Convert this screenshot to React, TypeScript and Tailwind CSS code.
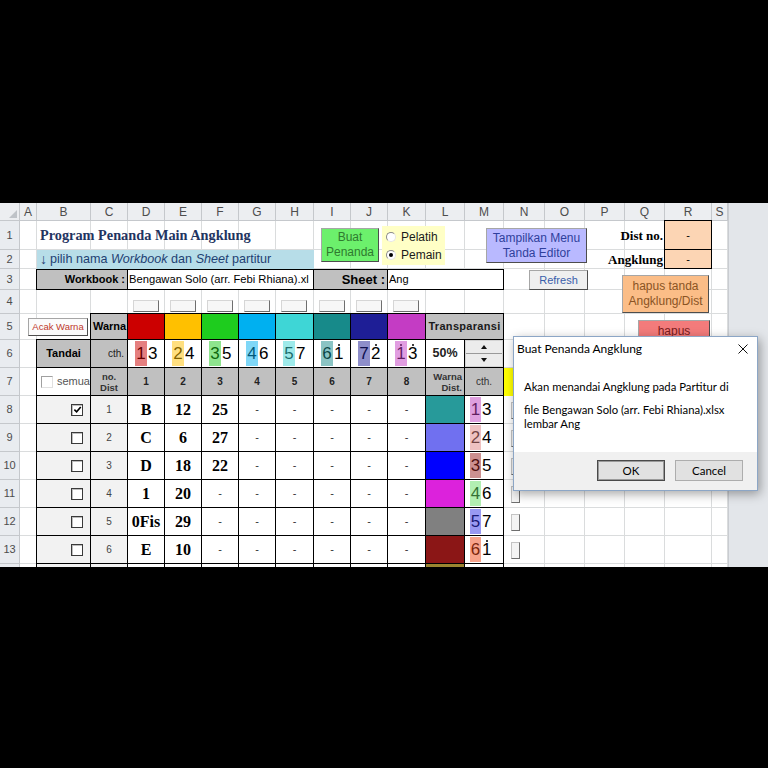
import React from 'react';

const SANS = "font-['Liberation_Sans',Arial,sans-serif]";
const SERIF = "font-['Liberation_Serif','Times_New_Roman',serif]";
const UI = "font-['Lato','Noto_Sans',sans-serif]";

const GRID =
  'grid grid-cols-[20px_17px_54px_37px_37px_37px_37px_37px_38px_37px_37px_38px_39px_39px_41px_40px_40px_40px_47px_16px] grid-rows-[18px_29px_19px_21px_24px_26px_28px_28px_28px_28px_28px_28px_28px_28px_28px]';

const COL = [
  'col-start-1', 'col-start-2', 'col-start-3', 'col-start-4', 'col-start-5',
  'col-start-6', 'col-start-7', 'col-start-8', 'col-start-9', 'col-start-10',
  'col-start-11', 'col-start-12', 'col-start-13', 'col-start-14', 'col-start-15',
  'col-start-16', 'col-start-17', 'col-start-18', 'col-start-19', 'col-start-20',
];
const ROW = [
  'row-start-1', 'row-start-2', 'row-start-3', 'row-start-4', 'row-start-5',
  'row-start-6', 'row-start-7', 'row-start-8', 'row-start-9', 'row-start-10',
  'row-start-11', 'row-start-12', 'row-start-13', 'row-start-14', 'row-start-15',
];
const at = (c: number, r: number) => `${COL[c - 1]} ${ROW[r - 1]}`;

const LETTERS = 'ABCDEFGHIJKLMNOPQRS'.split('');

// a trailing "*" marks a note with a dot above (high octave)
const SWATCH = [
  { fill: 'bg-[#cc0000]', a: '1', b: '3' },
  { fill: 'bg-[#ffc000]', a: '2', b: '4' },
  { fill: 'bg-[#1ecc1e]', a: '3', b: '5' },
  { fill: 'bg-[#00b0f0]', a: '4', b: '6' },
  { fill: 'bg-[#3ed6d6]', a: '5', b: '7' },
  { fill: 'bg-[#178a8a]', a: '6', b: '1*' },
  { fill: 'bg-[#1e1e96]', a: '7', b: '2*' },
  { fill: 'bg-[#c43cc4]', a: '1*', b: '3*' },
];

const DISTS = [
  { n: 1, on: true, vals: ['B', '12', '25'], color: 'bg-[#279a9a]', hl: 'bg-[#c040c0]', a: '1', b: '3' },
  { n: 2, on: false, vals: ['C', '6', '27'], color: 'bg-[#7070f0]', hl: 'bg-[#e08484]', a: '2', b: '4' },
  { n: 3, on: false, vals: ['D', '18', '22'], color: 'bg-[#0000ff]', hl: 'bg-[#9a2222]', a: '3', b: '5' },
  { n: 4, on: false, vals: ['1', '20', '-'], color: 'bg-[#dc22dc]', hl: 'bg-[#66e066]', a: '4', b: '6' },
  { n: 5, on: false, vals: ['0Fis', '29', '-'], color: 'bg-[#808080]', hl: 'bg-[#3434e6]', a: '5', b: '7' },
  { n: 6, on: false, vals: ['E', '10', '-'], color: 'bg-[#8b1616]', hl: 'bg-[#f04818]', a: '6', b: '1*' },
];

const EDGE = 'border-r border-b border-black';
const GRAY = 'bg-[#c0c0c0]';
const FORM_BTN = 'self-start justify-self-start flex flex-col items-center justify-center border border-[#a6a6a6] border-b-[#4d4d4d] border-r-[#4d4d4d]';

function Note({ t }: { t: string }) {
  if (!t.endsWith('*')) return <span>{t}</span>;
  return (
    <span className="relative">
      {t[0]}
      <span className="absolute left-[calc(50%-1px)] top-[-1px] h-[2px] w-[2px] rounded-full bg-black" />
    </span>
  );
}

function Pair({ hl, a, b, pad, w }: { hl: string; a: string; b: string; pad: string; w: string }) {
  return (
    <div className={`flex h-full items-center ${pad} ${SANS} text-[17px] leading-none text-black`}>
      <span className={`relative flex h-[25px] ${w} items-center justify-center`}>
        <Note t={a} />
        <span className={`absolute inset-0 opacity-50 ${hl}`} />
      </span>
      <span className="ml-px flex">
        <Note t={b} />
      </span>
    </div>
  );
}

function Check({ on, soft }: { on?: boolean; soft?: boolean }) {
  return (
    <span
      className={`flex h-[12px] w-[12px] items-center justify-center bg-white ${
        soft ? 'border border-[#a0a0a0] border-b-[#e0e0e0] border-r-[#e0e0e0]' : 'border border-[#3a3a3a] shadow-[inset_1px_1px_0_#bdbdbd]'
      }`}
    >
      {on && (
        <svg viewBox="0 0 10 10" className="h-[9px] w-[9px]">
          <path d="M1.5 5.2 L4 7.6 L8.6 2.2" fill="none" stroke="#000" strokeWidth="1.8" />
        </svg>
      )}
    </span>
  );
}

function Radio({ on }: { on?: boolean }) {
  return (
    <span className="flex h-[10px] w-[10px] items-center justify-center rounded-full border border-[#8a8a8a] border-b-[#e6e6e6] border-r-[#e6e6e6] bg-white">
      {on && <span className="h-[4px] w-[4px] rounded-full bg-black" />}
    </span>
  );
}

function Spin() {
  return (
    <div className="flex h-full flex-col bg-[#d4d4d4] px-px py-px">
      <div className="flex flex-1 items-center justify-center border-b border-[#9a9a9a] bg-[#ececec]">
        <svg viewBox="0 0 6 4" className="h-[4px] w-[6px]"><path d="M0 4 L3 0 L6 4 Z" fill="#111" /></svg>
      </div>
      <div className="flex flex-1 items-center justify-center bg-[#ececec]">
        <svg viewBox="0 0 6 4" className="h-[4px] w-[6px]"><path d="M0 0 L3 4 L6 0 Z" fill="#111" /></svg>
      </div>
    </div>
  );
}

function Dialog() {
  return (
    <div className={`absolute left-[513px] top-[336px] flex h-[155px] w-[245px] flex-col border border-[#8ca6c6] bg-white shadow-[2px_3px_10px_rgba(0,0,0,0.35)] ${UI}`}>
      <div className="flex h-[24px] shrink-0 items-center justify-between pl-[3px] pr-[9px] text-[12px] text-black">
        <span>Buat Penanda Angklung</span>
        <svg viewBox="0 0 10 10" className="h-[10px] w-[10px]">
          <path d="M0.5 0.5 L9.5 9.5 M9.5 0.5 L0.5 9.5" stroke="#111" strokeWidth="1" />
        </svg>
      </div>
      <div className="flex-1 pl-[10px] pt-[19px] text-[11.3px] leading-[14px] text-black">
        <p>Akan menandai Angklung pada Partitur di</p>
        <p className="mt-[9px]">file Bengawan Solo (arr. Febi Rhiana).xlsx</p>
        <p>lembar Ang</p>
      </div>
      <div className="flex h-[38px] shrink-0 items-start justify-end gap-[10px] bg-[#f0f0f0] pr-[14px] pt-[8px] text-[11.5px] text-black">
        <button className="flex h-[21px] w-[68px] items-center justify-center border border-[#4a4a4a] bg-[#e1e1e1] shadow-[inset_0_0_0_1px_#9a9a9a]">OK</button>
        <button className="flex h-[21px] w-[68px] items-center justify-center border border-[#adadad] bg-[#e1e1e1]">Cancel</button>
      </div>
    </div>
  );
}

export default function App() {
  const gridCells: React.ReactNode[] = [];
  for (let r = 2; r <= 15; r++) {
    for (let c = 2; c <= 20; c++) {
      gridCells.push(<div key={`g${r}-${c}`} className={`${at(c, r)} border-r border-b border-[#dadcdd] bg-white`} />);
    }
  }

  return (
    <div className="relative h-[768px] w-[768px] overflow-hidden bg-black">
      <div className="mt-[203px] flex h-[364px]">
        <div className="h-full w-[728px] overflow-hidden bg-white">
          <div className={`${GRID} ${SANS}`}>
            {/* headers */}
            <div className={`${at(1, 1)} flex items-end justify-end border-r border-b border-[#c5c8cc] bg-[#eceef1] p-[2px]`}>
              <svg viewBox="0 0 8 8" className="h-[8px] w-[8px]"><path d="M8 0 L8 8 L0 8 Z" fill="#bfc3c8" /></svg>
            </div>
            {LETTERS.map((l, i) => (
              <div key={l} className={`${at(i + 2, 1)} flex items-center justify-center border-r border-b border-[#c5c8cc] bg-[#eceef1] text-[12px] text-[#4d4d4d]`}>
                {l}
              </div>
            ))}
            {Array.from({ length: 14 }, (_, i) => (
              <div key={`rh${i}`} className={`${at(1, i + 2)} flex items-center justify-center border-r border-b border-[#c5c8cc] bg-[#e9ecf0] text-[11px] text-[#4d4d4d]`}>
                {i < 13 ? i + 1 : ''}
              </div>
            ))}

            {gridCells}

            {/* rows 1-3 */}
            <div className={`${at(3, 2)} col-span-8 flex items-center whitespace-nowrap pl-[3px] ${SERIF} text-[14.3px] font-bold text-[#1f3461]`}>
              Program Penanda Main Angklung
            </div>
            <div className={`${at(3, 3)} col-span-7 flex items-center whitespace-nowrap bg-[#b7dde8] pl-[3px] text-[12.6px] text-[#1f4173]`}>
              <span className="mr-[3px] text-[14px]">↓</span>pilih nama&nbsp;<i>Workbook</i>&nbsp;dan&nbsp;<i>Sheet</i>&nbsp;partitur
            </div>
            <div className={`${at(3, 4)} col-span-2 -ml-px flex items-center justify-end border border-black ${GRAY} pr-[2px] text-[11px] font-bold text-black`}>
              Workbook :
            </div>
            <div className={`${at(5, 4)} col-span-5 flex items-center overflow-hidden whitespace-nowrap border-y border-r border-black bg-white pl-[1px] text-[11.2px] text-black`}>
              Bengawan Solo (arr. Febi Rhiana).xl
            </div>
            <div className={`${at(10, 4)} col-span-2 flex items-center justify-end border-y border-r border-black ${GRAY} pr-[2px] text-[13px] font-bold text-black`}>
              Sheet :
            </div>
            <div className={`${at(12, 4)} col-span-3 flex items-center border-y border-r border-black bg-white pl-[1px] text-[11px] text-black`}>
              Ang
            </div>

            <div className={`${at(18, 2)} flex items-center justify-end pr-[2px] ${SERIF} whitespace-nowrap text-[13px] font-bold text-black`}>
              Dist no.
            </div>
            <div className={`${at(17, 3)} col-span-2 flex items-center justify-end pr-[2px] ${SERIF} whitespace-nowrap text-[13px] font-bold text-black`}>
              Angklung
            </div>
            <div className={`${at(19, 2)} -ml-px -mt-px flex items-center justify-center border border-black bg-[#fcd5b4] text-[11px] text-black`}>-</div>
            <div className={`${at(19, 3)} -ml-px flex items-center justify-center border-x border-b border-black bg-[#fcd5b4] text-[11px] text-black`}>-</div>

            {/* table: row 5 */}
            <div className={`${at(4, 6)} -ml-px -mt-px flex items-center border border-black ${GRAY} pl-[2px] text-[11px] font-bold text-black`}>
              Warna
            </div>
            {SWATCH.map((s, i) => (
              <div key={`sw${i}`} className={`${at(i + 5, 6)} -mt-px border-t ${EDGE} ${s.fill}`} />
            ))}
            <div className={`${at(13, 6)} col-span-2 -mt-px flex items-center justify-center border-t ${EDGE} ${GRAY} text-[11px] font-bold tracking-[0.3px] text-[#1a1a1a]`}>
              Transparansi
            </div>

            {/* row 6 */}
            <div className={`${at(3, 7)} -ml-px -mt-px flex items-center justify-center border border-black ${GRAY} text-[11px] font-bold text-black`}>
              Tandai
            </div>
            <div className={`${at(4, 7)} -ml-px flex items-center justify-end border-l ${EDGE} ${GRAY} pr-[3px] text-[10px] text-[#222]`}>
              cth.
            </div>
            {SWATCH.map((s, i) => (
              <div key={`p${i}`} className={`${at(i + 5, 7)} ${EDGE} bg-white`}>
                <Pair hl={s.fill} a={s.a} b={s.b} pad="pl-[7px]" w="w-[12px]" />
              </div>
            ))}
            <div className={`${at(13, 7)} flex items-center justify-center ${EDGE} bg-white text-[12.5px] font-semibold text-[#222]`}>
              50%
            </div>
            <div className={`${at(14, 7)} ${EDGE}`}>
              <Spin />
            </div>

            {/* row 7 */}
            <div className={`${at(3, 8)} -ml-px flex items-center gap-[4px] border-l ${EDGE} bg-white pl-[4px] text-[11px] text-[#555]`}>
              <Check soft />
              <span>semua</span>
            </div>
            <div className={`${at(4, 8)} flex flex-col items-center justify-center ${EDGE} ${GRAY} text-[9.5px] font-bold leading-[11px] text-[#333]`}>
              <span>no.</span>
              <span>Dist</span>
            </div>
            {SWATCH.map((_, i) => (
              <div key={`h${i}`} className={`${at(i + 5, 8)} flex items-center justify-center ${EDGE} ${GRAY} text-[10px] font-bold text-[#222]`}>
                {i + 1}
              </div>
            ))}
            <div className={`${at(13, 8)} flex flex-col items-end justify-center ${EDGE} ${GRAY} pr-[2px] text-[9.5px] font-bold leading-[11px] text-[#333]`}>
              <span>Warna</span>
              <span>Dist.</span>
            </div>
            <div className={`${at(14, 8)} flex items-center justify-center ${EDGE} ${GRAY} text-[10px] text-[#333]`}>
              cth.
            </div>
            <div className={`${at(15, 8)} bg-[#ffff00]`} />

            {/* rows 8-13 */}
            {DISTS.map((d, i) => {
              const r = i + 9;
              return (
                <React.Fragment key={`d${d.n}`}>
                  <div className={`${at(3, r)} -ml-px flex items-center justify-end border-l ${EDGE} bg-[#f2f2f2] pr-[7px]`}>
                    <Check on={d.on} />
                  </div>
                  <div className={`${at(4, r)} flex items-center justify-center ${EDGE} bg-[#f2f2f2] text-[10px] text-[#444]`}>
                    {d.n}
                  </div>
                  {d.vals.map((v, j) => (
                    <div
                      key={`v${j}`}
                      className={`${at(j + 5, r)} flex items-center justify-center ${EDGE} bg-white ${
                        v === '-' ? 'text-[11px] text-[#333]' : `${SERIF} text-[16px] font-bold text-black`
                      }`}
                    >
                      {v}
                    </div>
                  ))}
                  {[8, 9, 10, 11, 12].map((c) => (
                    <div key={`e${c}`} className={`${at(c, r)} flex items-center justify-center ${EDGE} bg-white text-[11px] text-[#333]`}>
                      -
                    </div>
                  ))}
                  <div className={`${at(13, r)} ${EDGE} ${d.color}`} />
                  <div className={`${at(14, r)} ${EDGE} bg-white`}>
                    <Pair hl={d.hl} a={d.a} b={d.b} pad="pl-[5px]" w="w-[11px]" />
                  </div>
                  <div className={`${at(15, r)} flex items-center`}>
                    <span className="ml-[7px] h-[17px] w-[9px] border border-[#c4c4c4] border-b-[#6e6e6e] border-r-[#6e6e6e] bg-[#f4f4f4]" />
                  </div>
                </React.Fragment>
              );
            })}

            {/* row 14 (cut off) */}
            <div className={`${at(3, 15)} -ml-px border-l ${EDGE} bg-[#f2f2f2]`} />
            <div className={`${at(4, 15)} ${EDGE} bg-[#f2f2f2]`} />
            {[5, 6, 7, 8, 9, 10, 11, 12, 14].map((c) => (
              <div key={`z${c}`} className={`${at(c, 15)} ${EDGE} bg-white`} />
            ))}
            <div className={`${at(13, 15)} ${EDGE} bg-[#9a8430]`} />

            {/* floating form controls */}
            {SWATCH.map((_, i) => (
              <div key={`sb${i}`} className={`${at(i + 5, 5)} ml-[5px] mt-[10px] h-[12px] w-[26px] self-start justify-self-start border border-[#d6d6d6] border-b-[#6e6e6e] border-r-[#6e6e6e] bg-[#f7f7f7]`} />
            ))}
            <div className={`${at(10, 2)} col-span-2 row-span-2 ml-[7px] mt-[7px] h-[34px] w-[58px] ${FORM_BTN} bg-[#6cf06c] text-[12px] leading-[15px] text-[#2f7a2f]`}>
              <span>Buat</span>
              <span>Penanda</span>
            </div>
            <div className={`${at(11, 2)} col-span-3 row-span-2 ml-[31px] mt-[5px] flex h-[39px] w-[63px] flex-col justify-center gap-[4px] self-start justify-self-start bg-[#ffffc6] pl-[4px] text-[12px] leading-[14px] text-[#1a1a1a]`}>
              <span className="flex items-center gap-[5px]"><Radio />Pelatih</span>
              <span className="flex items-center gap-[5px]"><Radio on />Pemain</span>
            </div>
            <div className={`${at(14, 2)} col-span-4 row-span-2 ml-[21px] mt-[7px] h-[35px] w-[101px] ${FORM_BTN} bg-[#b9b9ff] text-[12px] leading-[15px] text-[#2f3f9c]`}>
              <span>Tampilkan Menu</span>
              <span>Tanda Editor</span>
            </div>
            <div className={`${at(15, 4)} col-span-3 ml-[25px] mt-px h-[20px] w-[59px] ${FORM_BTN} bg-[#efefef] text-[11px] text-[#3a5eab]`}>
              Refresh
            </div>
            <div className={`${at(17, 4)} col-span-3 row-span-2 ml-[37px] mt-[6px] h-[38px] w-[87px] ${FORM_BTN} bg-[#fbbd87] text-[12px] leading-[15px] text-[#8a5424]`}>
              <span>hapus tanda</span>
              <span>Angklung/Dist</span>
            </div>
            <div className={`${at(18, 6)} col-span-2 row-span-2 ml-[13px] mt-[6px] h-[36px] w-[72px] ${FORM_BTN} justify-start! bg-[#f37b7b] pt-[3px] text-[12px] leading-[14px] text-[#7a1c1c]`}>
              hapus
            </div>
            <div className={`${at(2, 6)} col-span-2 ml-[8px] mt-[4px] h-[18px] w-[60px] ${FORM_BTN} bg-[#fbfbfb] text-[9.5px] text-[#c0392b]`}>
              Acak Warna
            </div>
          </div>
        </div>
        <div className="flex-1 border-l border-[#c9ccd1] bg-[#e3e6ea]" />
      </div>
      <Dialog />
    </div>
  );
}
